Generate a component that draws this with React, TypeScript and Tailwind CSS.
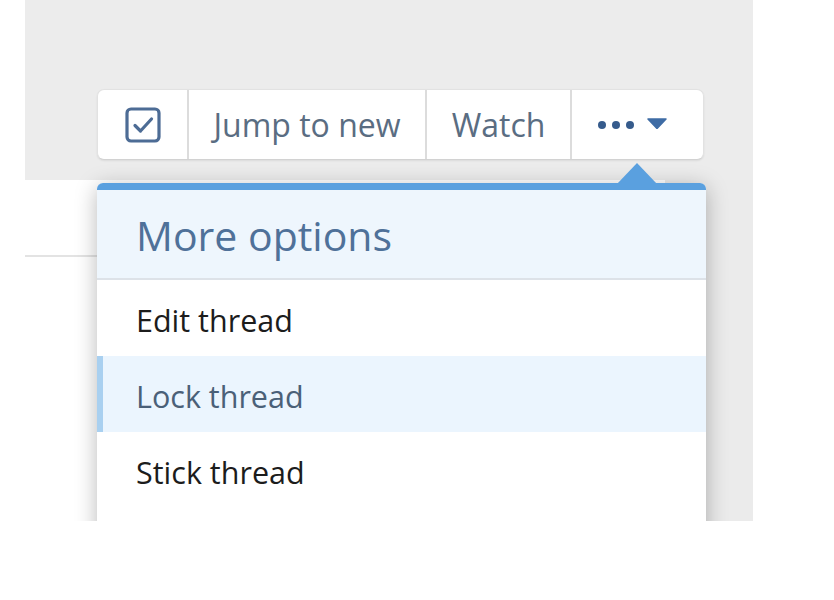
import React from "react";

const font = { fontFamily: '"Open Sans", "Noto Sans", Arial, sans-serif' };

function CheckIcon() {
  return (
    <svg width="36" height="36" viewBox="0 0 36 36" fill="none">
      <rect x="2" y="2" width="32" height="32" rx="4" stroke="#4d6c95" strokeWidth="3.2" />
      <path d="M10 18.5l5.5 5.5L26.5 12" stroke="#4d6c95" strokeWidth="3.2" strokeLinecap="round" strokeLinejoin="round" />
    </svg>
  );
}

function Toolbar() {
  return (
    <div className="flex h-[71px] w-[607px] rounded-[7px] border border-[#e2e2e2] border-b-[#d2d2d2] bg-white text-[32px] text-[#5a6d82] shadow-[0_1px_2px_rgba(0,0,0,0.08)]">
      <div className="flex w-[91px] items-center justify-center border-r-2 border-[#dcdcdc]">
        <CheckIcon />
      </div>
      <div className="flex w-[238px] items-center justify-center border-r-2 border-[#dcdcdc]">
        Jump to new
      </div>
      <div className="flex w-[145px] items-center justify-center border-r-2 border-[#dcdcdc]">
        Watch
      </div>
      <div className="flex flex-1 items-center pl-[26px]">
        <span className="flex gap-[6px]">
          <span className="h-[8px] w-[8px] rounded-full bg-[#365b8c]" />
          <span className="h-[8px] w-[8px] rounded-full bg-[#365b8c]" />
          <span className="h-[8px] w-[8px] rounded-full bg-[#365b8c]" />
        </span>
        <svg className="ml-[13px] -mt-[2px]" width="20" height="11" viewBox="0 0 20 11">
          <path d="M1 1h18L10 10.5z" fill="#3f6ca5" stroke="#3f6ca5" strokeLinejoin="round" strokeWidth="1.5" />
        </svg>
      </div>
    </div>
  );
}

function MenuRow({ label, active }: { label: string; active?: boolean }) {
  return (
    <div
      className={
        active
          ? "flex h-[76px] items-center border-l-[6px] border-[#a9d0f0] bg-[#ebf5fe] pl-[33px] pt-[5px] text-[30.5px] text-[#4a6078]"
          : "flex h-[76px] items-center pl-[39px] pt-[5px] text-[30.5px] text-[#1c1c1c]"
      }
    >
      {label}
    </div>
  );
}

function MoreMenu() {
  return (
    <div className="absolute left-[72px] top-[183px] w-[609px] rounded-t-[6px] bg-white shadow-[0_4px_22px_rgba(0,0,0,0.28)]">
      <svg className="absolute left-[520px] top-[-20px]" width="40" height="21" viewBox="0 0 40 21">
        <path d="M0 21L20 0l20 21z" fill="#5aa0df" />
      </svg>
      <div className="h-[7px] rounded-t-[6px] bg-[#5aa0df]" />
      <div className="flex h-[90px] items-center border-b-2 border-[#dde2e8] bg-[#eef6fd] pl-[39px] pt-[4px] text-[41px] text-[#4f7199]">
        More options
      </div>
      <MenuRow label="Edit thread" />
      <MenuRow label="Lock thread" active />
      <MenuRow label="Stick thread" />
      <div className="h-[40px]" />
    </div>
  );
}

export default function App() {
  return (
    <div className="h-[600px] w-[834px] bg-white" style={font}>
      <div className="relative ml-[25px] flex h-[521px] w-[728px] flex-col overflow-hidden bg-[#ebebeb]">
        <div className="h-[180px] bg-[#ececec] pl-[72px] pt-[89px]">
          <Toolbar />
        </div>
        <div className="flex flex-1">
          <div className="w-[640px] bg-white">
            <div className="h-[77px] border-b-2 border-[#e3e3e3]" />
          </div>
        </div>
        <MoreMenu />
      </div>
    </div>
  );
}
